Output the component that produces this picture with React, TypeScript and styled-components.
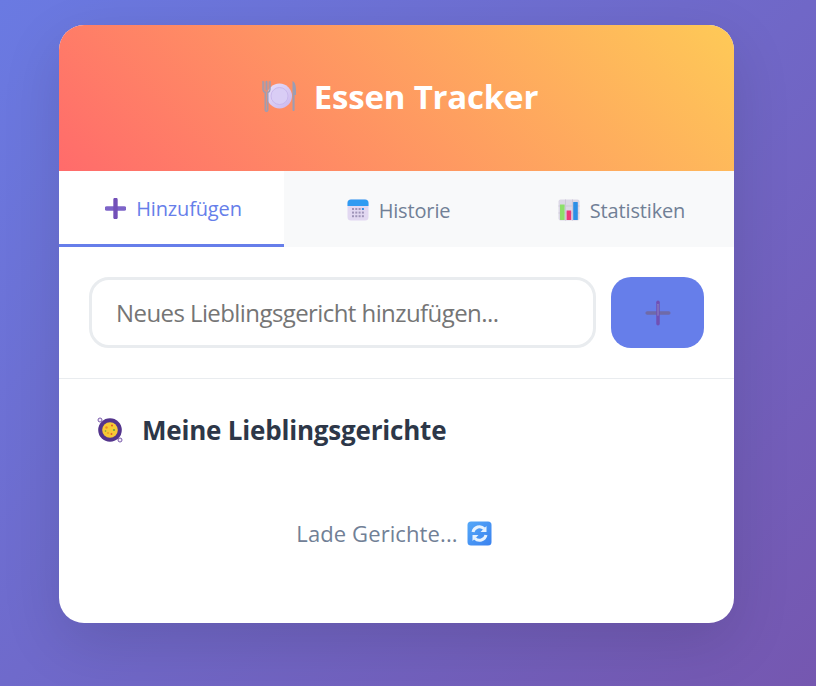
import React from 'react';
import styled, { createGlobalStyle } from 'styled-components';

const GlobalStyle = createGlobalStyle`
  html, body {
    margin: 0;
    height: 100%;
    overflow: hidden;
  }
  body {
    background: linear-gradient(135deg, #6a7ae2 0%, #7557b0 100%);
    font-family: 'Open Sans', 'Noto Sans', sans-serif;
  }
`;

const Page = styled.div`
  height: 686px;
  box-sizing: border-box;
  padding: 25px 0 0 59px;
`;

const Card = styled.div`
  width: 675px;
  height: 598px;
  background: #fff;
  border-radius: 25px;
  box-shadow: 0 20px 60px rgba(0, 0, 0, 0.12);
  overflow: hidden;
  display: flex;
  flex-direction: column;
`;

const Header = styled.header`
  height: 146px;
  flex: none;
  box-sizing: border-box;
  padding: 0 0 4px 6px;
  background: linear-gradient(45deg, #ff6b6b, #feca57);
  display: flex;
  align-items: center;
  justify-content: center;
  gap: 17px;
`;

const Title = styled.h1`
  margin: 0;
  color: #fff;
  font-size: 33px;
  font-weight: 700;
  letter-spacing: -0.2px;
`;

const Tabs = styled.nav`
  height: 76px;
  flex: none;
  display: grid;
  grid-template-columns: repeat(3, 1fr);
  background: #f8f9fa;
`;

const Tab = styled.button<{ $active?: boolean }>`
  border: none;
  border-bottom: 3px solid ${({ $active }) => ($active ? '#667eea' : 'transparent')};
  background: ${({ $active }) => ($active ? '#fff' : 'transparent')};
  color: ${({ $active }) => ($active ? '#667eea' : '#718096')};
  padding: ${({ $active }) => ($active ? '1px 0 0' : '5px 0 0')};
  font-family: inherit;
  font-size: 20px;
  letter-spacing: -0.15px;
  display: flex;
  align-items: center;
  justify-content: center;
  gap: 10px;
  cursor: pointer;
  &:not(:last-child) {
    padding-left: 4px;
  }
`;

const InputRow = styled.div`
  flex: none;
  display: flex;
  gap: 15px;
  padding: 30px;
  border-bottom: 1px solid #e9ecef;
`;

const TextField = styled.input`
  flex: 1;
  min-width: 0;
  height: 71px;
  box-sizing: border-box;
  border: 3px solid #e9ecef;
  border-radius: 20px;
  padding: 0 24px;
  font-family: inherit;
  font-size: 24px;
  letter-spacing: -0.58px;
  outline: none;
  &::placeholder {
    color: #757575;
    opacity: 1;
  }
`;

const AddButton = styled.button`
  width: 93px;
  height: 71px;
  flex: none;
  border: none;
  border-radius: 20px;
  background: #667eea;
  display: flex;
  align-items: center;
  justify-content: center;
  padding: 0;
  cursor: pointer;
`;

const Section = styled.section`
  flex: 1;
  padding: 33px 30px 0;
`;

const SectionHead = styled.div`
  display: flex;
  align-items: center;
  gap: 18px;
  padding-left: 7px;
`;

const SectionTitle = styled.h2`
  margin: 0;
  color: #2d3748;
  font-size: 26px;
  line-height: 36px;
  font-weight: 700;
  letter-spacing: -0.2px;
`;

const Loading = styled.div`
  margin-top: 70px;
  padding-right: 5px;
  display: flex;
  align-items: center;
  justify-content: center;
  gap: 9px;
  color: #718096;
  font-size: 22px;
  line-height: 30px;
  letter-spacing: 0.1px;
`;

const PlateIcon = () => (
  <svg width="36" height="36" viewBox="0 0 36 36">
    <defs>
      <linearGradient id="plate" x1="0" y1="0" x2="1" y2="1">
        <stop offset="0" stopColor="#e9e0fa" />
        <stop offset="1" stopColor="#c9b6ee" />
      </linearGradient>
    </defs>
    <circle cx="18.5" cy="18" r="12.5" fill="url(#plate)" />
    <circle cx="18.5" cy="18" r="8.5" fill="#d9cdf5" stroke="#c4b2ea" strokeWidth="0.8" />
    <path d="M2 3.5v8c0 1.8 1 2.6 2.2 3v17.5a1.2 1.2 0 0 0 2.6 0V14.5c1.2-.4 2.2-1.2 2.2-3v-8" fill="#9a9db4" fillOpacity="0.35" stroke="#9a9db4" strokeWidth="1.4" strokeLinecap="round" />
    <path d="M5.5 3.5v8" stroke="#9a9db4" strokeWidth="1.4" strokeLinecap="round" />
    <path d="M31.5 3c2.5 1 3.5 4.5 3.5 9v5h-1.4v15a1 1 0 0 1-2.1 0z" fill="#9a9db4" />
  </svg>
);

const PlusIcon = ({ size = 21, thin }: { size?: number; thin?: boolean }) => (
  <svg width={size} height={size} viewBox="0 0 24 24">
    <path d="M2 12h20" stroke={thin ? '#6f6aa8' : '#7d64c8'} strokeWidth={thin ? 3.2 : 5} strokeLinecap="round" />
    <path d="M12 2v20" stroke={thin ? '#7050b4' : '#7350b8'} strokeWidth={thin ? 3.2 : 5} strokeLinecap="round" />
    {thin && <path d="M12 4v10" stroke="#8d86c0" strokeWidth="1" strokeLinecap="round" />}
  </svg>
);

const CalendarIcon = () => (
  <svg width="22" height="22" viewBox="0 0 22 22">
    <rect x="0.5" y="0.5" width="21" height="21" rx="3.5" fill="#e2d8f1" />
    <path d="M0.5 7V4a3.5 3.5 0 0 1 3.5-3.5h14A3.5 3.5 0 0 1 21.5 4v3z" fill="#2f9bf2" />
    {[0, 1, 2].map((row) =>
      [0, 1, 2, 3].map((col) => (
        <rect
          key={`${row}-${col}`}
          x={5 + col * 3.3}
          y={9 + row * 3.6}
          width="2"
          height="2"
          fill={row === 0 && col === 3 ? '#2f8ee6' : '#9f94b8'}
        />
      )),
    )}
  </svg>
);

const ChartIcon = () => (
  <svg width="22" height="22" viewBox="0 0 22 22">
    <rect x="0.5" y="0.5" width="21" height="21" rx="2" fill="#dcd8e6" />
    <path d="M7.5 0.5v21M14.5 0.5v21M0.5 7h21M0.5 14h21" stroke="#ccc7d8" strokeWidth="1" />
    <rect x="2" y="5.5" width="4.6" height="15.5" fill="#8de06a" />
    <rect x="8.6" y="11.5" width="4.6" height="9.5" fill="#ec3a78" />
    <rect x="15.2" y="3" width="4.6" height="18" rx="0.6" fill="#2c8fe6" />
  </svg>
);

const PaellaIcon = () => (
  <svg width="28" height="28" viewBox="0 0 28 28">
    <circle cx="4" cy="4" r="2" fill="#f1ecf8" stroke="#7a5cab" strokeWidth="1" />
    <circle cx="24" cy="24" r="2" fill="#f1ecf8" stroke="#7a5cab" strokeWidth="1" />
    <circle cx="14" cy="14" r="11.8" fill="#53348c" />
    <circle cx="14" cy="14" r="7.8" fill="#f7c935" />
    <circle cx="10.5" cy="11.5" r="1.2" fill="#e98a2a" />
    <circle cx="16" cy="9.5" r="1" fill="#e2562e" />
    <circle cx="18" cy="14" r="1.1" fill="#6aa53c" />
    <circle cx="12" cy="17" r="1.1" fill="#e9a12a" />
    <circle cx="15.5" cy="18" r="0.9" fill="#e2562e" />
    <circle cx="9.5" cy="15" r="0.8" fill="#6aa53c" />
  </svg>
);

const RefreshIcon = () => (
  <svg width="25" height="25" viewBox="0 0 25 25">
    <defs>
      <linearGradient id="refresh" x1="0" y1="0" x2="1" y2="1">
        <stop offset="0" stopColor="#55a8f8" />
        <stop offset="1" stopColor="#3b82ef" />
      </linearGradient>
    </defs>
    <rect x="0.5" y="0.5" width="24" height="24" rx="3.5" fill="url(#refresh)" />
    <path d="M6 11a6.6 6.6 0 0 1 11.2-3.2" fill="none" stroke="#e8f3fe" strokeWidth="3" />
    <path d="M19.5 5v6h-6z" fill="#e8f3fe" />
    <path d="M19 14a6.6 6.6 0 0 1-11.2 3.2" fill="none" stroke="#e8f3fe" strokeWidth="3" />
    <path d="M5.5 20v-6h6z" fill="#e8f3fe" />
  </svg>
);

export default function App() {
  return (
    <>
      <GlobalStyle />
      <Page>
        <Card>
          <Header>
            <PlateIcon />
            <Title>Essen Tracker</Title>
          </Header>
          <Tabs>
            <Tab $active>
              <PlusIcon />
              Hinzufügen
            </Tab>
            <Tab>
              <CalendarIcon />
              Historie
            </Tab>
            <Tab>
              <ChartIcon />
              Statistiken
            </Tab>
          </Tabs>
          <InputRow>
            <TextField placeholder="Neues Lieblingsgericht hinzufügen..." />
            <AddButton aria-label="Hinzufügen">
              <PlusIcon size={26} thin />
            </AddButton>
          </InputRow>
          <Section>
            <SectionHead>
              <PaellaIcon />
              <SectionTitle>Meine Lieblingsgerichte</SectionTitle>
            </SectionHead>
            <Loading>
              Lade Gerichte...
              <RefreshIcon />
            </Loading>
          </Section>
        </Card>
      </Page>
    </>
  );
}
